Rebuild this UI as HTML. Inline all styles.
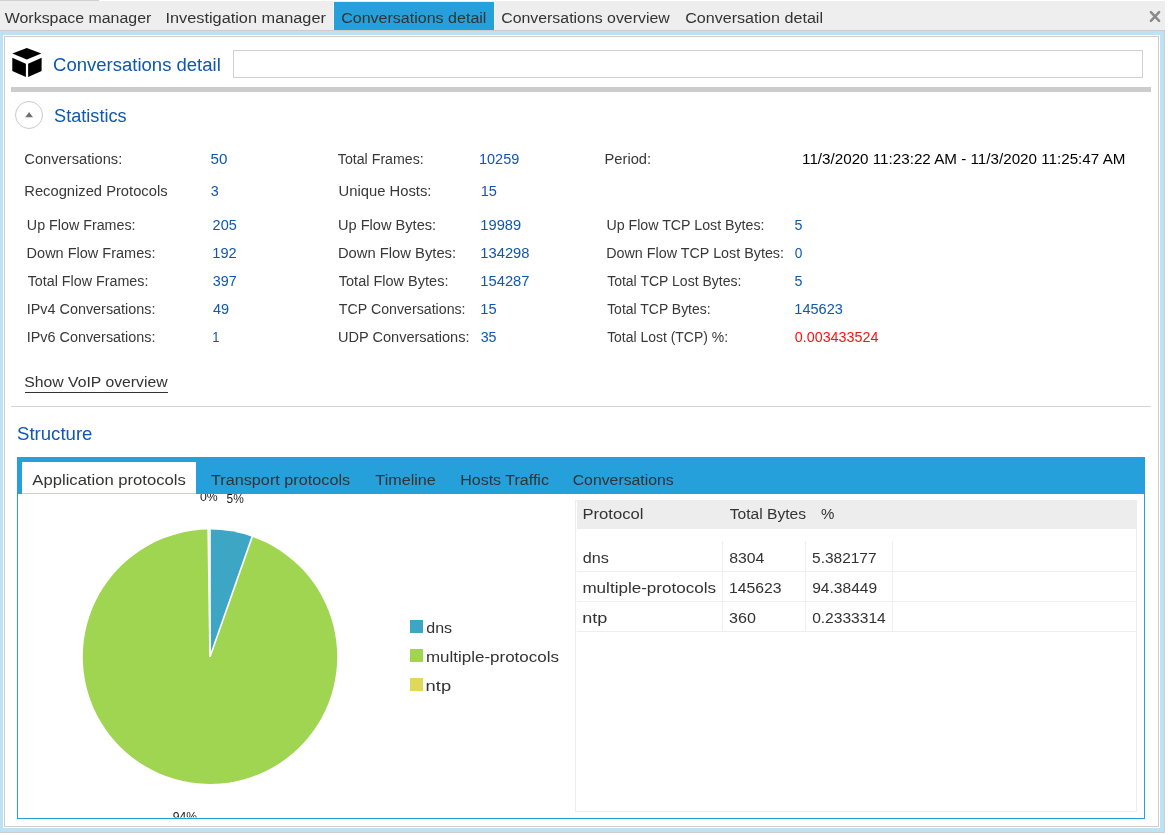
<!DOCTYPE html>
<html><head><meta charset="utf-8"><style>
html,body{margin:0;padding:0;background:#fff;width:1168px;height:835px;overflow:hidden}
svg{display:block;will-change:transform}
text{font-family:"Liberation Sans",sans-serif;}
</style></head><body>
<svg width="1168" height="835" viewBox="0 0 1168 835">
<defs><clipPath id="clipTop"><rect x="0" y="494" width="1168" height="60"/></clipPath>
<clipPath id="clipBot"><rect x="0" y="780" width="1168" height="37.5"/></clipPath></defs>
<g shape-rendering="crispEdges">
<rect x="0" y="0" width="99" height="1" fill="#d3d0d0"/>
<rect x="0" y="1" width="1165" height="29" fill="#eeeeee"/>
<rect x="334" y="2" width="160" height="28" fill="#25a0da"/>
<rect x="333" y="2" width="1" height="28" fill="#fbf5f3"/>
<rect x="494" y="2" width="1" height="28" fill="#fbf5f3"/>
<rect x="0" y="30" width="1165" height="1" fill="#cfcbcb"/>
<rect x="0" y="31" width="1164" height="801" fill="#bde2f4"/>
<rect x="1164" y="30" width="1" height="803" fill="#cfcbcb"/>
<rect x="0" y="832" width="1165" height="1" fill="#cfcbcb"/>
<rect x="3" y="35" width="1157" height="793" fill="#ffffff"/>
<rect x="4.5" y="36.5" width="1154" height="790" fill="none" stroke="#cfcccc" stroke-width="1"/>
</g><g stroke="#8a8a8a" stroke-width="2.5" stroke-linecap="round">
<line x1="1150.9" y1="12.2" x2="1159.1" y2="20.9"/><line x1="1159.1" y1="12.2" x2="1150.9" y2="20.9"/>
</g>
<g fill="#000">
<polygon points="12.3,53.5 26.8,48.1 41.4,53.5 26.8,59.5"/>
<polygon points="12.3,57.7 25.9,63.7 25.9,76.9 12.3,71.1"/>
<polygon points="28.1,63.7 41.6,57.7 41.6,71.1 28.1,76.9"/>
</g>
<g shape-rendering="crispEdges"><rect x="233.5" y="50.5" width="909" height="27" fill="none" stroke="#d0d0d0"/>
<rect x="11" y="87" width="1140" height="5" fill="#cccccc"/>
</g><circle cx="29" cy="115" r="13.5" fill="none" stroke="#cacaca"/>
<polygon points="25.2,117.2 29.1,112 33,117.2" fill="#707070"/><g shape-rendering="crispEdges">
<rect x="25" y="392" width="143" height="1" fill="#333"/>
<rect x="11" y="406" width="1140" height="1" fill="#d3d3d3"/>
<rect x="17" y="457" width="1128" height="37" fill="#25a0da"/>
<rect x="22" y="462" width="174" height="31" fill="#ffffff"/>
<rect x="22" y="493" width="174" height="1" fill="#a9d8f0"/>
<rect x="17" y="494" width="1" height="325" fill="#25a0da"/>
<rect x="1144" y="494" width="1" height="325" fill="#25a0da"/>
<rect x="17" y="818" width="1128" height="1" fill="#25a0da"/>

<rect x="575.5" y="500.5" width="561" height="311" fill="none" stroke="#ececec"/>
<rect x="577" y="500" width="560" height="29" fill="#ededed"/>
<g fill="#efefef">
<rect x="577" y="571" width="559" height="1"/>
<rect x="577" y="601" width="559" height="1"/>
<rect x="577" y="631" width="559" height="1"/>
<rect x="722" y="541" width="1" height="91"/>
<rect x="805" y="541" width="1" height="91"/>
<rect x="892" y="541" width="1" height="91"/>
</g>
</g>
<path d="M210,656.75 L210.00,529.55 A127.2,127.2 0 0 1 252.20,536.75 Z" fill="#3ea6c5"/><path d="M210,656.75 L252.20,536.75 A127.2,127.2 0 1 1 208.14,529.56 Z" fill="#9fd551"/><path d="M210,656.75 L208.14,529.56 A127.2,127.2 0 0 1 210.00,529.55 Z" fill="#e0d85a"/><line x1="210" y1="656.75" x2="210.00" y2="527.55" stroke="#fff" stroke-width="1.6"/><line x1="210" y1="656.75" x2="252.86" y2="534.87" stroke="#fff" stroke-width="1.6"/><line x1="210" y1="656.75" x2="208.11" y2="527.56" stroke="#fff" stroke-width="1.6"/><rect x="410" y="620" width="13" height="13" fill="#3ea6c5"/><rect x="410" y="649" width="13" height="13" fill="#9fd551"/><rect x="410" y="678" width="13" height="13" fill="#e0d85a"/>
<g clip-path="url(#clipTop)"><text transform="translate(199.90,501) scale(0.9464,1)" font-size="13" fill="#1a1a1a">0%</text><text transform="translate(226.60,503) scale(0.9152,1)" font-size="13" fill="#1a1a1a">5%</text></g><g clip-path="url(#clipBot)"><text transform="translate(172.80,821) scale(0.9373,1)" font-size="13" fill="#1a1a1a">94%</text></g>
<text transform="translate(4.79,23) scale(1.0272,1)" font-size="15.5" fill="#333333">Workspace manager</text><text transform="translate(165.42,23) scale(1.0533,1)" font-size="15.5" fill="#333333">Investigation manager</text><text transform="translate(341.14,23) scale(1.0350,1)" font-size="15.5" fill="#333333">Conversations detail</text><text transform="translate(501.18,23) scale(1.0248,1)" font-size="15.5" fill="#333333">Conversations overview</text><text transform="translate(685.13,23) scale(1.0401,1)" font-size="15.5" fill="#333333">Conversation detail</text><text transform="translate(53.09,71) scale(0.9745,1)" font-size="19" fill="#0f57b0">Conversations detail</text><text transform="translate(54.05,122) scale(0.9552,1)" font-size="19" fill="#0f57b0">Statistics</text><text transform="translate(24.28,164) scale(0.9483,1)" font-size="15.5" fill="#383838">Conversations:</text><text transform="translate(337.78,164) scale(0.9160,1)" font-size="15.5" fill="#383838">Total Frames:</text><text transform="translate(604.51,164) scale(0.9493,1)" font-size="15.5" fill="#383838">Period:</text><text transform="translate(24.27,196) scale(0.9512,1)" font-size="15.5" fill="#383838">Recognized Protocols</text><text transform="translate(338.52,196) scale(0.9550,1)" font-size="15.5" fill="#383838">Unique Hosts:</text><text transform="translate(26.87,230) scale(0.9222,1)" font-size="15.5" fill="#383838">Up Flow Frames:</text><text transform="translate(337.96,230) scale(0.9424,1)" font-size="15.5" fill="#383838">Up Flow Bytes:</text><text transform="translate(606.39,230) scale(0.9166,1)" font-size="15.5" fill="#383838">Up Flow TCP Lost Bytes:</text><text transform="translate(26.61,258) scale(0.9358,1)" font-size="15.5" fill="#383838">Down Flow Frames:</text><text transform="translate(337.94,258) scale(0.9539,1)" font-size="15.5" fill="#383838">Down Flow Bytes:</text><text transform="translate(606.15,258) scale(0.9251,1)" font-size="15.5" fill="#383838">Down Flow TCP Lost Bytes:</text><text transform="translate(27.64,286) scale(0.9224,1)" font-size="15.5" fill="#383838">Total Flow Frames:</text><text transform="translate(338.80,286) scale(0.9370,1)" font-size="15.5" fill="#383838">Total Flow Bytes:</text><text transform="translate(607.14,286) scale(0.9051,1)" font-size="15.5" fill="#383838">Total TCP Lost Bytes:</text><text transform="translate(26.67,314) scale(0.9296,1)" font-size="15.5" fill="#383838">IPv4 Conversations:</text><text transform="translate(338.82,314) scale(0.9159,1)" font-size="15.5" fill="#383838">TCP Conversations:</text><text transform="translate(607.14,314) scale(0.9011,1)" font-size="15.5" fill="#383838">Total TCP Bytes:</text><text transform="translate(26.67,342) scale(0.9296,1)" font-size="15.5" fill="#383838">IPv6 Conversations:</text><text transform="translate(337.98,342) scale(0.9397,1)" font-size="15.5" fill="#383838">UDP Conversations:</text><text transform="translate(607.14,342) scale(0.9004,1)" font-size="15.5" fill="#383838">Total Lost (TCP) %:</text><text transform="translate(210.59,164) scale(0.9806,1)" font-size="15.5" fill="#0f57b0">50</text><text transform="translate(479.00,164) scale(0.9354,1)" font-size="15.5" fill="#0f57b0">10259</text><text transform="translate(802.08,164) scale(0.9813,1)" font-size="15.5" fill="#000000">11/3/2020 11:23:22 AM - 11/3/2020 11:25:47 AM</text><text transform="translate(210.65,196) scale(0.9286,1)" font-size="15.5" fill="#0f57b0">3</text><text transform="translate(480.70,196) scale(0.9400,1)" font-size="15.5" fill="#0f57b0">15</text><text transform="translate(212.61,230) scale(0.9357,1)" font-size="15.5" fill="#0f57b0">205</text><text transform="translate(480.31,230) scale(0.9478,1)" font-size="15.5" fill="#0f57b0">19989</text><text transform="translate(794.38,230) scale(0.9221,1)" font-size="15.5" fill="#0f57b0">5</text><text transform="translate(212.31,258) scale(0.9428,1)" font-size="15.5" fill="#0f57b0">192</text><text transform="translate(480.28,258) scale(0.9524,1)" font-size="15.5" fill="#0f57b0">134298</text><text transform="translate(794.75,258) scale(0.8830,1)" font-size="15.5" fill="#0f57b0">0</text><text transform="translate(212.67,286) scale(0.9267,1)" font-size="15.5" fill="#0f57b0">397</text><text transform="translate(480.27,286) scale(0.9537,1)" font-size="15.5" fill="#0f57b0">154287</text><text transform="translate(794.38,286) scale(0.9221,1)" font-size="15.5" fill="#0f57b0">5</text><text transform="translate(213.05,314) scale(0.9360,1)" font-size="15.5" fill="#0f57b0">49</text><text transform="translate(480.30,314) scale(0.9468,1)" font-size="15.5" fill="#0f57b0">15</text><text transform="translate(794.34,314) scale(0.9389,1)" font-size="15.5" fill="#0f57b0">145623</text><text transform="translate(212.31,342) scale(0.8401,1)" font-size="15.5" fill="#0f57b0">1</text><text transform="translate(480.67,342) scale(0.9208,1)" font-size="15.5" fill="#0f57b0">35</text><text transform="translate(794.73,342) scale(0.9256,1)" font-size="15.5" fill="#fa1212">0.003433524</text><text transform="translate(24.30,387) scale(1.0169,1)" font-size="15.5" fill="#333333">Show VoIP overview</text><text transform="translate(17.00,440) scale(0.9793,1)" font-size="19" fill="#0f57b0">Structure</text><text transform="translate(32.36,485) scale(1.0734,1)" font-size="15.5" fill="#333333">Application protocols</text><text transform="translate(211.00,485) scale(1.0468,1)" font-size="15.5" fill="#333333">Transport protocols</text><text transform="translate(375.36,485) scale(1.0443,1)" font-size="15.5" fill="#333333">Timeline</text><text transform="translate(460.13,485) scale(1.0351,1)" font-size="15.5" fill="#333333">Hosts Traffic</text><text transform="translate(572.67,485) scale(1.0207,1)" font-size="15.5" fill="#333333">Conversations</text><text transform="translate(426.31,633) scale(1.0322,1)" font-size="15.5" fill="#333333">dns</text><text transform="translate(425.91,662) scale(1.0958,1)" font-size="15.5" fill="#333333">multiple-protocols</text><text transform="translate(425.61,691) scale(1.1823,1)" font-size="15.5" fill="#333333">ntp</text><text transform="translate(582.39,519) scale(1.0746,1)" font-size="15.5" fill="#333333">Protocol</text><text transform="translate(729.82,519) scale(1.0059,1)" font-size="15.5" fill="#333333">Total Bytes</text><text transform="translate(820.94,519) scale(0.9711,1)" font-size="15.5" fill="#333333">%</text><text transform="translate(582.74,563) scale(1.0467,1)" font-size="15.5" fill="#333333">dns</text><text transform="translate(729.22,563) scale(1.0217,1)" font-size="15.5" fill="#333333">8304</text><text transform="translate(812.03,563) scale(0.9990,1)" font-size="15.5" fill="#333333">5.382177</text><text transform="translate(582.39,593) scale(1.1014,1)" font-size="15.5" fill="#333333">multiple-protocols</text><text transform="translate(728.90,593) scale(1.0152,1)" font-size="15.5" fill="#333333">145623</text><text transform="translate(812.18,593) scale(1.0059,1)" font-size="15.5" fill="#333333">94.38449</text><text transform="translate(582.15,623) scale(1.1658,1)" font-size="15.5" fill="#333333">ntp</text><text transform="translate(729.06,623) scale(1.0395,1)" font-size="15.5" fill="#333333">360</text><text transform="translate(812.13,623) scale(1.0052,1)" font-size="15.5" fill="#333333">0.2333314</text>
</svg>
</body></html>
